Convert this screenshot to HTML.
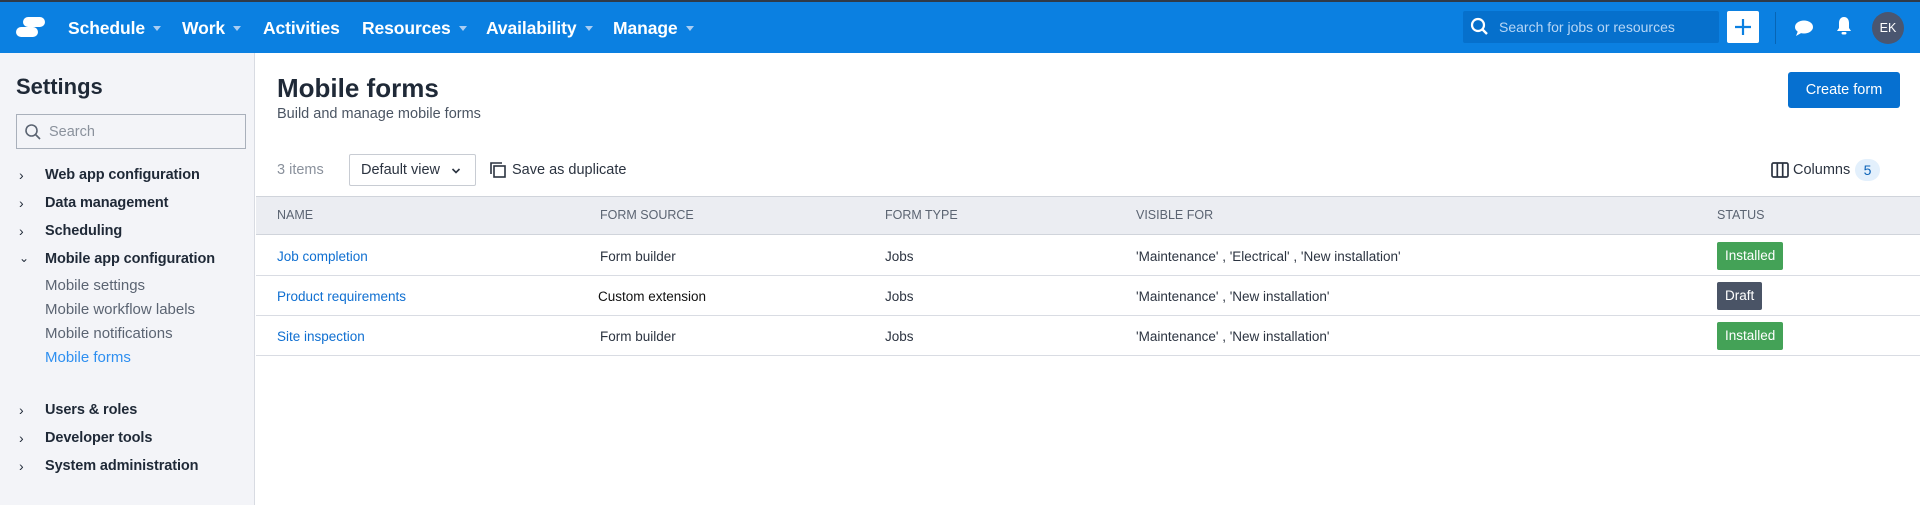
<!DOCTYPE html>
<html><head><meta charset="utf-8"><style>
*{box-sizing:border-box;margin:0;padding:0}
body{width:1920px;height:505px;overflow:hidden;font-family:"Liberation Sans",sans-serif;background:#fff;color:#1f2937;position:relative}
.a{position:absolute;white-space:nowrap}
.nav{position:absolute;left:0;top:0;width:1920px;height:53px;background:#0b80e1;border-top:2px solid #2f3a48}
.ni{position:absolute;top:16px;color:#fff;font-size:17.5px;font-weight:bold;letter-spacing:-0.1px}
.car{display:inline-block;width:0;height:0;border-left:4px solid transparent;border-right:4px solid transparent;border-top:5px solid #a9cdf3;margin-left:8px;vertical-align:3px}
.side{position:absolute;left:0;top:53px;width:255px;height:452px;background:#f3f4f8;border-right:1px solid #d8dbe2}
.ti{position:absolute;left:45px;font-size:14.5px;font-weight:bold;color:#1f2937;letter-spacing:-0.1px}
.ch{position:absolute;left:19px;font-size:14px;color:#1f2937}
.si{position:absolute;left:45px;font-size:15px;color:#5b6472}
.th{position:absolute;top:208px;font-size:12.5px;color:#5b6472}
.td{position:absolute;font-size:13.5px;color:#2b3340}
.ln{position:absolute;left:256px;width:1664px;height:1px;background:#d9dce3}
.bd{position:absolute;left:1717px;height:28px;color:#fff;font-size:13.5px;line-height:28px;padding:0 8px;border-radius:2px}
</style></head><body>
<div class="nav">
<svg class="a" style="left:15px;top:13px" width="30" height="24"><rect x="8" y="2" width="22" height="10" rx="5" fill="#fff"/><rect x="1" y="12" width="22" height="10" rx="5" fill="#fff"/></svg>
<div class="ni" style="left:68px">Schedule<span class="car"></span></div>
<div class="ni" style="left:182px">Work<span class="car"></span></div>
<div class="ni" style="left:263px">Activities</div>
<div class="ni" style="left:362px">Resources<span class="car"></span></div>
<div class="ni" style="left:486px">Availability<span class="car"></span></div>
<div class="ni" style="left:613px">Manage<span class="car"></span></div>
<div class="a" style="left:1463px;top:9px;width:256px;height:32px;background:#0670cc;border-radius:2px"></div>
<svg class="a" style="left:1470px;top:15px" width="20" height="20"><circle cx="8" cy="8" r="6" stroke="#fff" stroke-width="2.2" fill="none"/><line x1="12.5" y1="12.5" x2="17" y2="17" stroke="#fff" stroke-width="2.4"/></svg>
<div class="a" style="left:1499px;top:17px;color:#b7d6f5;font-size:14px">Search for jobs or resources</div>
<div class="a" style="left:1727px;top:9px;width:32px;height:32px;background:#fff;border-radius:2px"></div>
<svg class="a" style="left:1733px;top:15px" width="20" height="20"><path d="M10 2V18M2 10H18" stroke="#0b80e1" stroke-width="2.2"/></svg>
<div class="a" style="left:1775px;top:10px;width:1px;height:32px;background:#0765b5"></div>
<svg class="a" style="left:1794px;top:17px" width="20" height="18"><ellipse cx="10" cy="8" rx="9" ry="6.5" fill="#fff"/><path d="M4 12L2 17L9 13Z" fill="#fff"/></svg>
<svg class="a" style="left:1836px;top:14px" width="16" height="20"><path d="M8 1C4.5 1 3 4 3 7V12L1 15H15L13 12V7C13 4 11.5 1 8 1Z" fill="#fff"/><rect x="5.5" y="16" width="5" height="2.5" rx="1.2" fill="#fff"/></svg>
<div class="a" style="left:1872px;top:10px;width:32px;height:32px;border-radius:50%;background:#4a5670;color:#fff;font-size:12.5px;text-align:center;line-height:32px">EK</div>
</div>
<div class="side">
<div class="a" style="left:16px;top:21px;font-size:22px;font-weight:bold;color:#1f2937">Settings</div>
<div class="a" style="left:16px;top:61px;width:230px;height:35px;border:1px solid #a9b0bb;background:#f3f4f8"></div>
<svg class="a" style="left:24px;top:70px" width="18" height="18"><circle cx="7.5" cy="7.5" r="5.5" stroke="#5b6472" stroke-width="1.6" fill="none"/><line x1="11.5" y1="11.5" x2="16" y2="16" stroke="#5b6472" stroke-width="1.7"/></svg>
<div class="a" style="left:49px;top:71px;font-size:14.5px;color:#8a919c">Search</div>
<div class="ch" style="top:114px">›</div><div class="ti" style="top:114px">Web app configuration</div>
<div class="ch" style="top:142px">›</div><div class="ti" style="top:142px">Data management</div>
<div class="ch" style="top:170px">›</div><div class="ti" style="top:170px">Scheduling</div>
<div class="ch" style="top:198px;font-size:12px">⌄</div><div class="ti" style="top:198px">Mobile app configuration</div>
<div class="si" style="top:224px">Mobile settings</div>
<div class="si" style="top:248px">Mobile workflow labels</div>
<div class="si" style="top:272px">Mobile notifications</div>
<div class="si" style="top:296px;color:#2e8ff0">Mobile forms</div>
<div class="ch" style="top:349px">›</div><div class="ti" style="top:349px">Users &amp; roles</div>
<div class="ch" style="top:377px">›</div><div class="ti" style="top:377px">Developer tools</div>
<div class="ch" style="top:405px">›</div><div class="ti" style="top:405px">System administration</div>
</div>
<div class="a" style="left:277px;top:73px;font-size:26px;font-weight:bold;color:#1f2937">Mobile forms</div>
<div class="a" style="left:277px;top:106px;font-size:14.5px;color:#4b5563">Build and manage mobile forms</div>
<div class="a" style="left:1788px;top:72px;width:112px;height:36px;background:#0670d0;border-radius:3px;color:#fff;font-size:14.5px;text-align:center;line-height:36px">Create form</div>
<div class="a" style="left:277px;top:162px;font-size:14.5px;color:#8a919c">3 items</div>
<div class="a" style="left:349px;top:154px;width:127px;height:32px;border:1px solid #c8ccd3;border-radius:2px"></div>
<div class="a" style="left:361px;top:162px;font-size:14.5px;color:#2b3340">Default view</div>
<svg class="a" style="left:451px;top:167px" width="10" height="8"><path d="M1.5 2L5 5.5L8.5 2" stroke="#2b3340" stroke-width="1.6" fill="none"/></svg>
<svg class="a" style="left:489px;top:161px" width="18" height="18"><path d="M2 13V2H13" stroke="#2b3340" stroke-width="1.6" fill="none"/><rect x="5" y="5" width="11" height="11" stroke="#2b3340" stroke-width="1.6" fill="none"/></svg>
<div class="a" style="left:512px;top:162px;font-size:14.5px;color:#2b3340">Save as duplicate</div>
<svg class="a" style="left:1771px;top:162px" width="18" height="16"><rect x="1" y="1" width="16" height="14" rx="1.5" stroke="#2b3340" stroke-width="1.7" fill="none"/><path d="M6.3 1V15M11.7 1V15" stroke="#2b3340" stroke-width="1.7"/></svg>
<div class="a" style="left:1793px;top:162px;font-size:14.5px;color:#2b3340">Columns</div>
<div class="a" style="left:1855px;top:159px;width:25px;height:22px;border-radius:11px;background:#e3f0fc;color:#0c63b8;font-size:14px;text-align:center;line-height:22px">5</div>
<div class="a" style="left:256px;top:196px;width:1664px;height:39px;background:#ebedf2;border-top:1px solid #d0d4db;border-bottom:1px solid #d0d4db"></div>
<div class="th" style="left:277px">NAME</div>
<div class="th" style="left:600px">FORM SOURCE</div>
<div class="th" style="left:885px">FORM TYPE</div>
<div class="th" style="left:1136px">VISIBLE FOR</div>
<div class="th" style="left:1717px">STATUS</div>
<div class="ln" style="top:275px"></div><div class="ln" style="top:315px"></div><div class="ln" style="top:355px"></div>
<div class="td" style="left:277px;top:249px;color:#0f6fd1">Job completion</div>
<div class="td" style="left:600px;top:249px">Form builder</div>
<div class="td" style="left:885px;top:249px">Jobs</div>
<div class="td" style="left:1136px;top:249px">'Maintenance' , 'Electrical' , 'New installation'</div>
<div class="bd" style="top:242px;background:#44a257">Installed</div>
<div class="td" style="left:277px;top:289px;color:#0f6fd1">Product requirements</div>
<div class="td" style="left:598px;top:289px;color:#111">Custom extension</div>
<div class="td" style="left:885px;top:289px">Jobs</div>
<div class="td" style="left:1136px;top:289px">'Maintenance' , 'New installation'</div>
<div class="bd" style="top:282px;background:#4a5466">Draft</div>
<div class="td" style="left:277px;top:329px;color:#0f6fd1">Site inspection</div>
<div class="td" style="left:600px;top:329px">Form builder</div>
<div class="td" style="left:885px;top:329px">Jobs</div>
<div class="td" style="left:1136px;top:329px">'Maintenance' , 'New installation'</div>
<div class="bd" style="top:322px;background:#44a257">Installed</div>
</body></html>
